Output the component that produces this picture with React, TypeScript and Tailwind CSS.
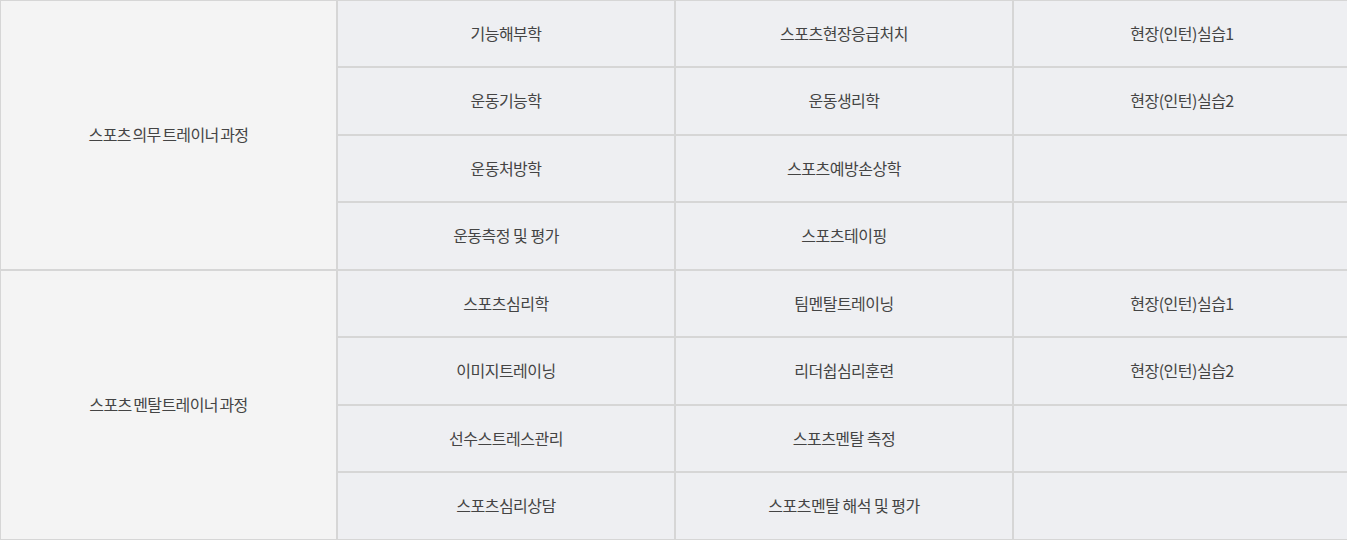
import React from "react";

type Group = { title: string; rows: [string, string, string][] };

const groups: Group[] = [
  {
    title: "스포츠 의무 트레이너 과정",
    rows: [
      ["기능해부학", "스포츠현장응급처치", "현장(인턴)실습1"],
      ["운동기능학", "운동생리학", "현장(인턴)실습2"],
      ["운동처방학", "스포츠예방손상학", ""],
      ["운동측정 및 평가", "스포츠테이핑", ""],
    ],
  },
  {
    title: "스포츠 멘탈트레이너 과정",
    rows: [
      ["스포츠심리학", "팀멘탈트레이닝", "현장(인턴)실습1"],
      ["이미지트레이닝", "리더쉽심리훈련", "현장(인턴)실습2"],
      ["선수스트레스관리", "스포츠멘탈 측정", ""],
      ["스포츠심리상담", "스포츠멘탈 해석 및 평가", ""],
    ],
  },
];

export default function App() {
  return (
    <div
      className="w-full h-[540px] overflow-hidden bg-white"
      style={{ fontFamily: '"Noto Sans CJK KR", "Noto Sans", sans-serif' }}
    >
      <div className="grid w-[1351px] grid-cols-[337px_338px_338px_338px] grid-rows-[67px_68px_67px_68px_67px_68px_67px_68px] text-[#444] leading-none">
        {groups.map((g, gi) => (
          <React.Fragment key={gi}>
            <div className="row-span-4 col-start-1 flex items-center justify-center border border-[#d6d6d6] bg-[#f4f4f4] pb-[2px] text-[16px] tracking-[-0.6px] [word-spacing:-1.5px]">
              {g.title}
            </div>
            {g.rows.map((r, ri) =>
              r.map((c, ci) => (
                <div
                  key={`${gi}-${ri}-${ci}`}
                  className="flex items-center justify-center border border-[#d6d6d6] bg-[#eeeff2] pb-[2px] text-[16px] tracking-[-0.5px]"
                >
                  {c}
                </div>
              ))
            )}
          </React.Fragment>
        ))}
      </div>
    </div>
  );
}
